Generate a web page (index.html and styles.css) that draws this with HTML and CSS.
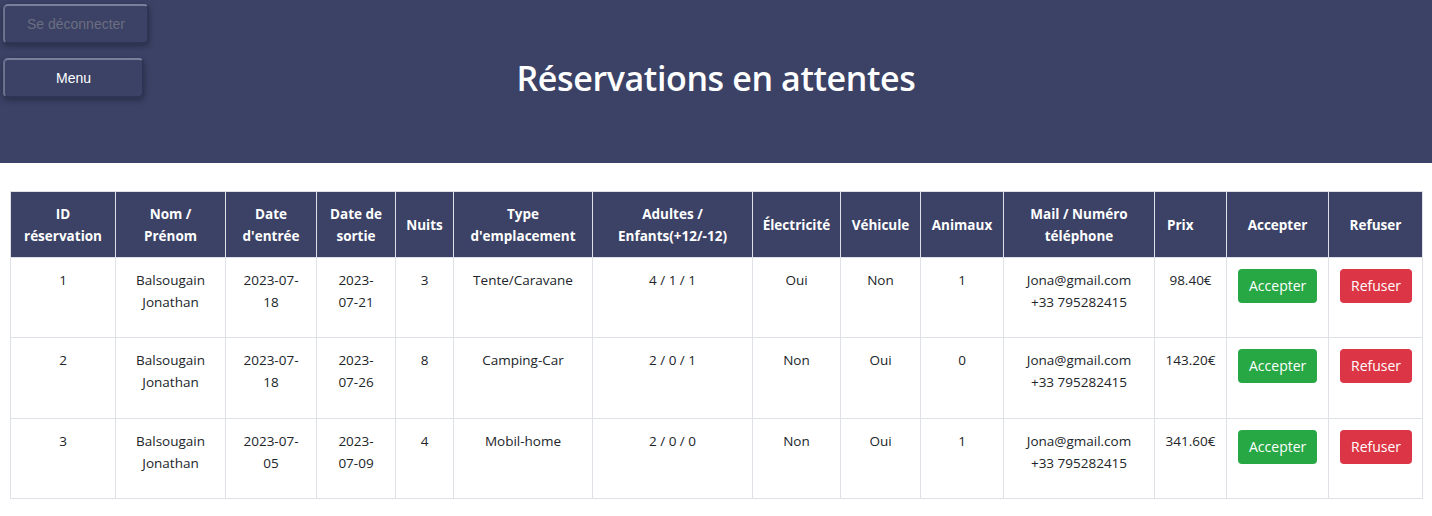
FILE: index.html
```html
<!DOCTYPE html>
<html lang="fr">
<head>
<meta charset="utf-8">
<title>Réservations en attentes</title>
<link rel="stylesheet" href="styles.css">
</head>
<body>
<header class="banner">
  <div class="nav-buttons">
    <button class="nav-btn nav-btn--muted">Se déconnecter</button>
    <button class="nav-btn nav-btn--menu">Menu</button>
  </div>
  <h1 class="title">Réservations en attentes</h1>
  <div class="spacer"></div>
</header>
<main class="content">
  <table class="res-table">
    <colgroup>
      <col class="c1"><col class="c2"><col class="c3"><col class="c4"><col class="c5"><col class="c6"><col class="c7"><col class="c8"><col class="c9"><col class="c10"><col class="c11"><col class="c12"><col class="c13"><col class="c14">
    </colgroup>
    <thead>
      <tr>
        <th>ID<br>réservation</th>
        <th>Nom /<br>Prénom</th>
        <th>Date<br>d'entrée</th>
        <th>Date de<br>sortie</th>
        <th>Nuits</th>
        <th>Type<br>d'emplacement</th>
        <th>Adultes /<br>Enfants(+12/-12)</th>
        <th>Électricité</th>
        <th>Véhicule</th>
        <th>Animaux</th>
        <th>Mail / Numéro<br>téléphone</th>
        <th class="left">Prix</th>
        <th>Accepter</th>
        <th>Refuser</th>
      </tr>
    </thead>
    <tbody>
      <tr>
        <td>1</td>
        <td>Balsougain<br>Jonathan</td>
        <td>2023-07-<br>18</td>
        <td>2023-<br>07-21</td>
        <td>3</td>
        <td>Tente/Caravane</td>
        <td>4 / 1 / 1</td>
        <td>Oui</td>
        <td>Non</td>
        <td>1</td>
        <td>Jona@gmail.com<br>+33 795282415</td>
        <td>98.40€</td>
        <td class="act"><button class="btn btn-accept">Accepter</button></td>
        <td class="act"><button class="btn btn-refuse">Refuser</button></td>
      </tr>
      <tr class="row-tall">
        <td>2</td>
        <td>Balsougain<br>Jonathan</td>
        <td>2023-07-<br>18</td>
        <td>2023-<br>07-26</td>
        <td>8</td>
        <td>Camping-Car</td>
        <td>2 / 0 / 1</td>
        <td>Non</td>
        <td>Oui</td>
        <td>0</td>
        <td>Jona@gmail.com<br>+33 795282415</td>
        <td>143.20€</td>
        <td class="act"><button class="btn btn-accept">Accepter</button></td>
        <td class="act"><button class="btn btn-refuse">Refuser</button></td>
      </tr>
      <tr>
        <td>3</td>
        <td>Balsougain<br>Jonathan</td>
        <td>2023-07-<br>05</td>
        <td>2023-<br>07-09</td>
        <td>4</td>
        <td>Mobil-home</td>
        <td>2 / 0 / 0</td>
        <td>Non</td>
        <td>Oui</td>
        <td>1</td>
        <td>Jona@gmail.com<br>+33 795282415</td>
        <td>341.60€</td>
        <td class="act"><button class="btn btn-accept">Accepter</button></td>
        <td class="act"><button class="btn btn-refuse">Refuser</button></td>
      </tr>
    </tbody>
  </table>
</main>
</body>
</html>
```

FILE: styles.css
```css
* { box-sizing: border-box; }

body {
  margin: 0;
  background: #ffffff;
  color: #212529;
  font-family: "Open Sans", "Noto Sans", sans-serif;
  font-size: 13.5px;
}

.banner {
  background: #3b4266;
  height: 163px;
  display: grid;
  grid-template-columns: 1fr auto 1fr;
  align-items: start;
}

.nav-buttons {
  display: flex;
  flex-direction: column;
  align-items: flex-start;
  gap: 14px;
  padding: 4px 0 0 3px;
}

.nav-btn {
  height: 40px;
  background: #3b4266;
  border: 2px solid;
  border-color: #7a7f9c #2e3453 #2e3453 #6c7190;
  border-radius: 5px;
  box-shadow: 0 2px 6px rgba(0, 0, 0, 0.35);
  font-family: "Liberation Sans", Arial, sans-serif;
  font-size: 14px;
  padding: 0;
}

.nav-btn--muted {
  width: 146px;
  color: #6b6e80;
}

.nav-btn--menu {
  width: 141px;
  color: #ffffff;
}

.title {
  margin: 56px 0 0;
  color: #ffffff;
  font-size: 34px;
  font-weight: 600;
  line-height: 44px;
  letter-spacing: -0.38px;
}

.content {
  padding: 28px 10px 0;
}

.res-table {
  width: 1412px;
  border-collapse: collapse;
  table-layout: fixed;
}

.c1 { width: 105px; }
.c2 { width: 110px; }
.c3 { width: 91px; }
.c4 { width: 79px; }
.c5 { width: 58px; }
.c6 { width: 139px; }
.c7 { width: 160px; }
.c8 { width: 88px; }
.c9 { width: 80px; }
.c10 { width: 83px; }
.c11 { width: 151px; }
.c12 { width: 72px; }
.c13 { width: 102px; }
.c14 { width: 94px; }

.res-table th {
  background: #3b4266;
  color: #ffffff;
  font-weight: 700;
  border: 1px solid #dee2e6;
  padding: 0 4px;
  height: 66px;
  line-height: 22px;
  text-align: center;
  vertical-align: middle;
}

.res-table th.left {
  text-align: left;
  padding-left: 12px;
}

.res-table td {
  border: 1px solid #dee2e6;
  padding: 11px 4px 0;
  height: 80px;
  line-height: 22px;
  text-align: center;
  vertical-align: top;
}

.res-table .row-tall td {
  height: 81px;
}

.res-table td.act {
  text-align: left;
  padding-left: 11px;
}

.btn {
  border: none;
  border-radius: 4px;
  color: #ffffff;
  font-family: inherit;
  font-size: 14px;
  line-height: 22px;
  padding: 6px 11px;
}

.btn-accept { background: #28a745; }
.btn-refuse { background: #dc3545; }
```
